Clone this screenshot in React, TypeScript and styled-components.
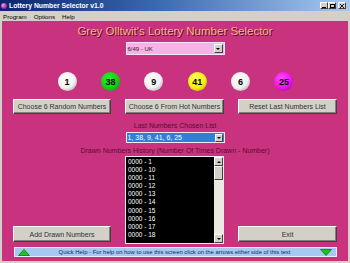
import React from "react";
import styled, { createGlobalStyle } from "styled-components";

const Global = createGlobalStyle`
  html, body { margin: 0; padding: 0; background: #d4d0c8; }
  body { font-family: "Liberation Sans", Arial, sans-serif; }
  * { box-sizing: border-box; }
`;

const Window = styled.div`
  width: 350px;
  height: 263px;
  display: flex;
  flex-direction: column;
  background: #d4d0c8;
  overflow: hidden;
`;

const TitleBar = styled.div`
  height: 11px;
  display: flex;
  align-items: center;
  padding: 0 2px 0 1px;
  background: linear-gradient(90deg, #0a246a 0%, #3a6ab0 45%, #a6caf0 100%);
`;

const AppIcon = styled.span`
  width: 6px;
  height: 6px;
  border-radius: 50%;
  background: radial-gradient(circle at 35% 35%, #f59af0, #9a1a9a 70%);
  margin-right: 2px;
`;

const TitleText = styled.span`
  color: #fff;
  font-weight: bold;
  font-size: 6.8px;
  line-height: 11px;
  flex: 1;
  white-space: nowrap;
`;

const CaptionButtons = styled.div`
  display: flex;
  align-items: center;
  margin-right: 2px;
`;

const CaptionButton = styled.span<{ $gap?: boolean }>`
  width: 8px;
  height: 7px;
  background: #d4d0c8;
  border-top: 1px solid #fff;
  border-left: 1px solid #fff;
  border-right: 1px solid #404040;
  border-bottom: 1px solid #404040;
  margin-left: ${(p) => (p.$gap ? "2px" : "0")};
  display: flex;
  align-items: center;
  justify-content: center;
`;

const MenuBar = styled.div`
  height: 10px;
  display: flex;
  align-items: center;
  gap: 7px;
  padding-left: 3px;
  font-size: 6.2px;
  color: #000;
`;

const Content = styled.main`
  flex: 1;
  margin: 0 2px 2px;
  background: #c9327e;
  display: flex;
  flex-direction: column;
  align-items: center;
`;

const Heading = styled.h1`
  margin: 4px 0 0;
  font-size: 11.5px;
  line-height: 13px;
  font-weight: normal;
  color: #f5b57e;
  text-shadow: 1px 1px 0 #5c0a30;
  white-space: nowrap;
`;

const Select = styled.div<{ $bg: string; $fg: string; $h: number; $top: number; $size: number }>`
  width: 99px;
  height: ${(p) => p.$h}px;
  margin-top: ${(p) => p.$top}px;
  background: ${(p) => p.$bg};
  color: ${(p) => p.$fg};
  border: 1px solid #f4e8f0;
  display: flex;
  align-items: center;
  font-size: ${(p) => p.$size}px;
  padding: 0 1px 0 1px;
`;

const SelectText = styled.span`
  flex: 1;
  white-space: nowrap;
`;

const ArrowBox = styled.span<{ $w: number; $h: number }>`
  width: ${(p) => p.$w}px;
  height: ${(p) => p.$h}px;
  background: #d4d0c8;
  border-top: 1px solid #fff;
  border-left: 1px solid #fff;
  border-right: 1px solid #404040;
  border-bottom: 1px solid #404040;
  display: flex;
  align-items: center;
  justify-content: center;
`;

const DownTri = styled.span`
  width: 0;
  height: 0;
  border-left: 2px solid transparent;
  border-right: 2px solid transparent;
  border-top: 2px solid #000;
`;

const UpTri = styled.span`
  width: 0;
  height: 0;
  border-left: 2px solid transparent;
  border-right: 2px solid transparent;
  border-bottom: 2px solid #000;
`;

const BallRow = styled.div`
  margin-top: 17px;
  height: 19px;
  display: flex;
  gap: 24.4px;
  justify-content: center;
  padding-left: 1px;
`;

const Ball = styled.div<{ $c1: string; $c2: string; $c3: string }>`
  width: 19px;
  height: 19px;
  border-radius: 50%;
  background: radial-gradient(circle at 40% 35%, ${(p) => p.$c1} 0%, ${(p) => p.$c2} 55%, ${(p) => p.$c3} 100%);
  display: flex;
  align-items: center;
  justify-content: center;
  font-weight: bold;
  font-size: 9px;
  color: #000;
`;

const ThreeCols = styled.div<{ $top: number }>`
  margin-top: ${(p) => p.$top}px;
  display: grid;
  grid-template-columns: 98px 99px 99px;
  column-gap: 14px;
`;

const Button = styled.button<{ $h: number }>`
  height: ${(p) => p.$h}px;
  margin: 0;
  padding: 0;
  background: #d4d0c8;
  border-top: 1px solid #fff;
  border-left: 1px solid #fff;
  border-right: 1px solid #404040;
  border-bottom: 1px solid #404040;
  box-shadow: inset -1px -1px 0 #808080;
  font-family: "Liberation Sans", Arial, sans-serif;
  font-size: 7px;
  color: #303030;
  white-space: nowrap;
`;

const BottomButton = styled(Button)`
  align-self: end;
  margin-bottom: 2px;
`;

const Label = styled.div<{ $top: number }>`
  margin-top: ${(p) => p.$top}px;
  font-size: 7px;
  line-height: 9px;
  color: #5a0c32;
  white-space: nowrap;
`;

const ListBox = styled.div`
  height: 88px;
  background: #000;
  border: 1px solid #f0e6ee;
  display: flex;
`;

const ListItems = styled.ul`
  flex: 1;
  margin: 0;
  padding: 1px 0 0 2px;
  list-style: none;
  color: #fff;
  font-size: 6.5px;
`;

const ListItem = styled.li`
  height: 8.1px;
  line-height: 8.1px;
  white-space: nowrap;
`;

const ScrollBar = styled.div`
  width: 9px;
  display: flex;
  flex-direction: column;
  background: #ebe9e4;
`;

const Thumb = styled.div`
  height: 14px;
  background: #d4d0c8;
  border-top: 1px solid #fff;
  border-left: 1px solid #fff;
  border-right: 1px solid #404040;
  border-bottom: 1px solid #404040;
`;

const Track = styled.div`
  flex: 1;
`;

const QuickHelp = styled.div`
  margin-top: 3px;
  width: 323px;
  height: 10px;
  background: #a7c8f0;
  border: 1px solid #e8eef8;
  display: flex;
  align-items: center;
  padding: 0 4px 0 3px;
`;

const HelpText = styled.span`
  flex: 1;
  text-align: center;
  font-size: 5.9px;
  color: #14285a;
  white-space: nowrap;
`;

const Arrow = ({ up }: { up?: boolean }) => (
  <svg width="12" height="7" viewBox="0 0 12 7">
    {up ? (
      <polygon points="6,0.5 11.5,6.5 0.5,6.5" fill="#18c818" stroke="#0a7a0a" strokeWidth="0.8" />
    ) : (
      <polygon points="0.5,0.5 11.5,0.5 6,6.5" fill="#18c818" stroke="#0a7a0a" strokeWidth="0.8" />
    )}
  </svg>
);

const balls = [
  { n: 1, c: ["#ffffff", "#f0f0f0", "#8a8a8a"] },
  { n: 38, c: ["#30f030", "#10d010", "#078a07"] },
  { n: 9, c: ["#ffffff", "#f0f0f0", "#8a8a8a"] },
  { n: 41, c: ["#ffff60", "#f4ee10", "#a89a00"] },
  { n: 6, c: ["#ffffff", "#f0f0f0", "#8a8a8a"] },
  { n: 25, c: ["#ff50ff", "#f010f0", "#900090"] },
];

const items = ["1", "10", "11", "12", "13", "14", "15", "16", "17", "18"];

export default function App() {
  return (
    <Window>
      <Global />
      <TitleBar>
        <AppIcon />
        <TitleText>Lottery Number Selector v1.0</TitleText>
        <CaptionButtons>
          <CaptionButton>
            <svg width="4" height="4" viewBox="0 0 4 4"><rect x="0" y="3" width="4" height="1" fill="#000" /></svg>
          </CaptionButton>
          <CaptionButton>
            <svg width="5" height="4" viewBox="0 0 5 4"><rect x="0.5" y="0.5" width="4" height="3" fill="none" stroke="#000" strokeWidth="1" /></svg>
          </CaptionButton>
          <CaptionButton $gap>
            <svg width="4" height="4" viewBox="0 0 4 4"><path d="M0 0L4 4M4 0L0 4" stroke="#000" strokeWidth="0.9" /></svg>
          </CaptionButton>
        </CaptionButtons>
      </TitleBar>
      <MenuBar>
        <span>Program</span>
        <span>Options</span>
        <span>Help</span>
      </MenuBar>
      <Content>
        <Heading>Grey Olltwit's Lottery Number Selector</Heading>
        <Select $bg="#f8b2e6" $fg="#3a1030" $h={13} $top={4} $size={6}>
          <SelectText>6/49 - UK</SelectText>
          <ArrowBox $w={9} $h={9}><DownTri /></ArrowBox>
        </Select>
        <BallRow>
          {balls.map((b, i) => (
            <Ball key={i} $c1={b.c[0]} $c2={b.c[1]} $c3={b.c[2]}>{b.n}</Ball>
          ))}
        </BallRow>
        <ThreeCols $top={8}>
          <Button $h={15}>Choose 6 Random Numbers</Button>
          <Button $h={15}>Choose 6 From Hot Numbers</Button>
          <Button $h={15}>Reset Last Numbers List</Button>
        </ThreeCols>
        <Label $top={7}>Last Numbers Chosen List</Label>
        <Select $bg="#2f80d4" $fg="#ffffff" $h={11} $top={2} $size={7}>
          <SelectText>1, 38, 9, 41, 6, 25</SelectText>
          <ArrowBox $w={8} $h={8}><DownTri /></ArrowBox>
        </Select>
        <Label $top={3}>Drawn Numbers History (Number Of Times Drawn - Number)</Label>
        <ThreeCols $top={1}>
          <BottomButton $h={16}>Add Drawn Numbers</BottomButton>
          <ListBox>
            <ListItems>
              {items.map((n) => (
                <ListItem key={n}>0000 - {n}</ListItem>
              ))}
            </ListItems>
            <ScrollBar>
              <ArrowBox $w={9} $h={9}><UpTri /></ArrowBox>
              <Thumb />
              <Track />
              <ArrowBox $w={9} $h={9}><DownTri /></ArrowBox>
            </ScrollBar>
          </ListBox>
          <BottomButton $h={16}>Exit</BottomButton>
        </ThreeCols>
        <QuickHelp>
          <Arrow up />
          <HelpText>Quick Help - For help on how to use this screen click on the arrows either side of this text</HelpText>
          <Arrow />
        </QuickHelp>
      </Content>
    </Window>
  );
}
